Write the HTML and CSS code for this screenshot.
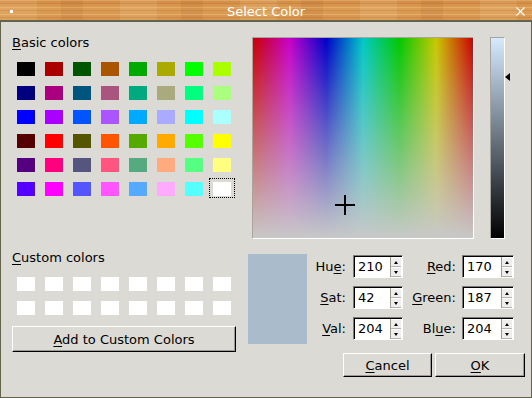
FILE: index.html
```html
<!DOCTYPE html>
<html lang="en">
<head>
    <meta charset="UTF-8">
    <title>Select Color</title>
    <link rel="stylesheet" href="styles.css">
</head>
<body>
    <div class="dialog">
        <div class="titlebar">
            <span class="menu-dot"></span>
            <span class="title">Select Color</span>
            <svg class="close" width="9" height="9" viewBox="0 0 9 9">
                <path d="M0.5 0.5L8.5 8.5M8.5 0.5L0.5 8.5" stroke="#fff" stroke-width="1.1" fill="none"/>
            </svg>
        </div>

        <div class="body">
            <div class="left">
                <div class="label"><u>B</u>asic colors</div>
                <div class="swatches" id="basicColors"></div>

                <div class="label custom-label"><u>C</u>ustom colors</div>
                <div class="swatches" id="customColors"></div>

                <button class="btn add-btn"><u>A</u>dd to Custom Colors</button>
            </div>

            <div class="right">
                <div class="pickers">
                    <div class="spectrum">
                        <span class="cross-h"></span>
                        <span class="cross-v"></span>
                    </div>
                    <div class="lum-wrap">
                        <div class="lum"></div>
                        <span class="lum-arrow"></span>
                    </div>
                </div>

                <div class="values">
                    <div class="preview"></div>
                    <div class="spins">
                        <label class="spin-label">Hu<u>e</u>:</label>
                        <div class="spin"><span class="spin-val">210</span><span class="spin-btns"><span class="up"></span><span class="down"></span></span></div>
                        <label class="spin-label"><u>R</u>ed:</label>
                        <div class="spin wide"><span class="spin-val">170</span><span class="spin-btns"><span class="up"></span><span class="down"></span></span></div>

                        <label class="spin-label"><u>S</u>at:</label>
                        <div class="spin"><span class="spin-val">42</span><span class="spin-btns"><span class="up"></span><span class="down"></span></span></div>
                        <label class="spin-label"><u>G</u>reen:</label>
                        <div class="spin wide"><span class="spin-val">187</span><span class="spin-btns"><span class="up"></span><span class="down"></span></span></div>

                        <label class="spin-label"><u>V</u>al:</label>
                        <div class="spin"><span class="spin-val">204</span><span class="spin-btns"><span class="up"></span><span class="down"></span></span></div>
                        <label class="spin-label">Bl<u>u</u>e:</label>
                        <div class="spin wide"><span class="spin-val">204</span><span class="spin-btns"><span class="up"></span><span class="down"></span></span></div>
                    </div>
                </div>

                <div class="buttons">
                    <button class="btn dlg-btn cancel-btn"><u>C</u>ancel</button>
                    <button class="btn dlg-btn ok-btn"><u>O</u>K</button>
                </div>
            </div>
        </div>
    </div>

    <script>
        // Qt standard basic colors, row by row
        const basicColors = [
            '#000000', '#aa0000', '#005500', '#aa5500', '#00aa00', '#aaaa00', '#00ff00', '#aaff00',
            '#00007f', '#aa007f', '#00557f', '#aa557f', '#00aa7f', '#aaaa7f', '#00ff7f', '#aaff7f',
            '#0000ff', '#aa00ff', '#0055ff', '#aa55ff', '#00aaff', '#aaaaff', '#00ffff', '#aaffff',
            '#550000', '#ff0000', '#555500', '#ff5500', '#55aa00', '#ffaa00', '#55ff00', '#ffff00',
            '#55007f', '#ff007f', '#55557f', '#ff557f', '#55aa7f', '#ffaa7f', '#55ff7f', '#ffff7f',
            '#5500ff', '#ff00ff', '#5555ff', '#ff55ff', '#55aaff', '#ffaaff', '#55ffff', '#ffffff'
        ];

        function fillGrid(id, colors, selected) {
            const grid = document.getElementById(id);
            grid.innerHTML = colors.map((c, i) => `
                <div class="cell${i === selected ? ' selected' : ''}">
                    <div class="swatch" style="background: ${c};"></div>
                </div>
            `).join('');
        }

        fillGrid('basicColors', basicColors, 47);
        fillGrid('customColors', new Array(16).fill('#ffffff'), -1);
    </script>
</body>
</html>
```

FILE: styles.css
```css
* {
    margin: 0;
    padding: 0;
    box-sizing: border-box;
}

body {
    font-family: "DejaVu Sans", "Liberation Sans", sans-serif;
    font-size: 13px;
    color: #000;
    background: #dcdad5;
}

u {
    text-decoration: underline;
    text-underline-offset: 2px;
}

.dialog {
    width: 532px;
    height: 398px;
    background: #dcdad5;
}

/* wood title bar */
.titlebar {
    position: relative;
    height: 22px;
    border-bottom: 2px solid #63644b;
    display: flex;
    align-items: center;
    justify-content: center;
    background:
        repeating-linear-gradient(180deg, rgba(255, 225, 170, 0.28) 0 1px, transparent 1px 3px, rgba(150, 80, 20, 0.18) 3px 4px, transparent 4px 7px),
        repeating-linear-gradient(90deg, rgba(255, 230, 180, 0.12) 0 37px, transparent 37px 61px, rgba(140, 70, 20, 0.10) 61px 83px, transparent 83px 120px),
        linear-gradient(180deg, #d28c45 0%, #dc9c54 45%, #d79650 100%);
}

.menu-dot {
    position: absolute;
    left: 10px;
    top: 10px;
    width: 3px;
    height: 3px;
    background: #fff;
}

.title {
    color: #fff;
    font-size: 13px;
    line-height: 20px;
    margin-top: 3px;
}

.close {
    position: absolute;
    left: 516px;
    top: 7px;
}

.body {
    height: 376px;
    border-left: 1px solid #63644b;
    border-right: 1px solid #63644b;
    border-bottom: 1px solid #63644b;
    display: flex;
    padding-left: 11px;
    gap: 12px;
}

/* left column */
.left {
    width: 224px;
    padding-top: 13px;
    display: flex;
    flex-direction: column;
}

.label {
    line-height: 16px;
    height: 16px;
}

.swatches {
    margin-top: 7px;
    margin-left: 1px;
    display: grid;
    grid-template-columns: repeat(8, 26px);
    column-gap: 2px;
    row-gap: 4px;
}

.cell {
    width: 26px;
    height: 20px;
    padding: 3px 3px 1px 3px;
    border: 1px dotted transparent;
}

.cell.selected {
    border-color: #000;
}

.swatch {
    width: 18px;
    height: 14px;
}

.custom-label {
    margin-top: 52px;
}

#customColors {
    margin-top: 7px;
}

.btn {
    font-family: "DejaVu Sans", "Liberation Sans", sans-serif;
    font-size: 13px;
    color: #000;
    background: #dcdad5;
    border: 1px solid;
    border-color: #fff #000 #000 #fff;
    box-shadow: inset -1px -1px 0 #9e9a91;
}

.add-btn {
    margin-top: 9px;
    height: 26px;
    width: 224px;
}

/* right column */
.right {
    width: 277px;
    padding-top: 15px;
    display: flex;
    flex-direction: column;
}

.pickers {
    display: flex;
    padding-left: 4px;
}

.spectrum {
    position: relative;
    width: 222px;
    height: 202px;
    border: 1px solid;
    border-color: #a8a59f #fff #fff #a8a59f;
    background:
        linear-gradient(180deg, rgba(200, 200, 200, 0), rgb(200, 200, 200)),
        linear-gradient(90deg, rgb(200, 0, 0), rgb(200, 0, 200), rgb(0, 0, 200), rgb(0, 200, 200), rgb(0, 200, 0), rgb(200, 200, 0), rgb(200, 0, 0));
}

.cross-h,
.cross-v {
    position: absolute;
    background: #000;
}

.cross-h {
    left: 82px;
    top: 166px;
    width: 20px;
    height: 2px;
}

.cross-v {
    left: 91px;
    top: 157px;
    width: 2px;
    height: 20px;
}

.lum-wrap {
    position: relative;
    margin-left: 16px;
    width: 21px;
}

.lum {
    width: 15px;
    height: 202px;
    border: 1px solid;
    border-color: #a8a59f #fff #fff #a8a59f;
    background: linear-gradient(180deg, rgb(213, 234, 255), #000);
}

.lum-arrow {
    position: absolute;
    left: 15px;
    top: 36px;
    width: 0;
    height: 0;
    border-top: 4px solid transparent;
    border-bottom: 4px solid transparent;
    border-right: 5px solid #000;
}

.values {
    margin-top: 15px;
    display: flex;
}

.preview {
    width: 59px;
    height: 90px;
    background: #aabbcc;
}

.spins {
    margin-top: 1px;
    display: grid;
    grid-template-columns: 46px 50px 59px 52px;
    grid-auto-rows: 23px;
    row-gap: 8px;
    align-items: center;
}

.spin-label {
    text-align: right;
    padding-right: 7px;
    line-height: 23px;
    white-space: nowrap;
}

.spin-label:nth-child(4n+3) {
    padding-right: 6px;
}

.spin {
    height: 23px;
    display: flex;
    background: #fff;
    border: 1px solid;
    border-color: #7c7a75 #fff #fff #7c7a75;
    box-shadow: inset 1px 1px 0 #000;
}

.spin-val {
    flex: 1;
    padding-left: 4px;
    line-height: 21px;
}

.spin-btns {
    width: 11px;
    margin: 1px 1px 0 0;
    display: flex;
    flex-direction: column;
    border-left: 1px solid #9e9a91;
}

.spin-btns span {
    flex: 1;
    display: flex;
    align-items: center;
    justify-content: center;
    background: #efeeec;
    border-top: 1px solid #fff;
    border-bottom: 1px solid #b5b2ab;
}

.spin-btns .up::after,
.spin-btns .down::after {
    content: "";
    width: 0;
    height: 0;
    border-left: 2px solid transparent;
    border-right: 2px solid transparent;
}

.spin-btns .up::after {
    border-bottom: 3px solid #000;
}

.spin-btns .down::after {
    border-top: 3px solid #000;
}

.buttons {
    margin-top: 9px;
    display: flex;
    justify-content: flex-end;
    gap: 3px;
}

.dlg-btn {
    height: 24px;
}

.cancel-btn {
    width: 89px;
}

.ok-btn {
    width: 90px;
}
```
